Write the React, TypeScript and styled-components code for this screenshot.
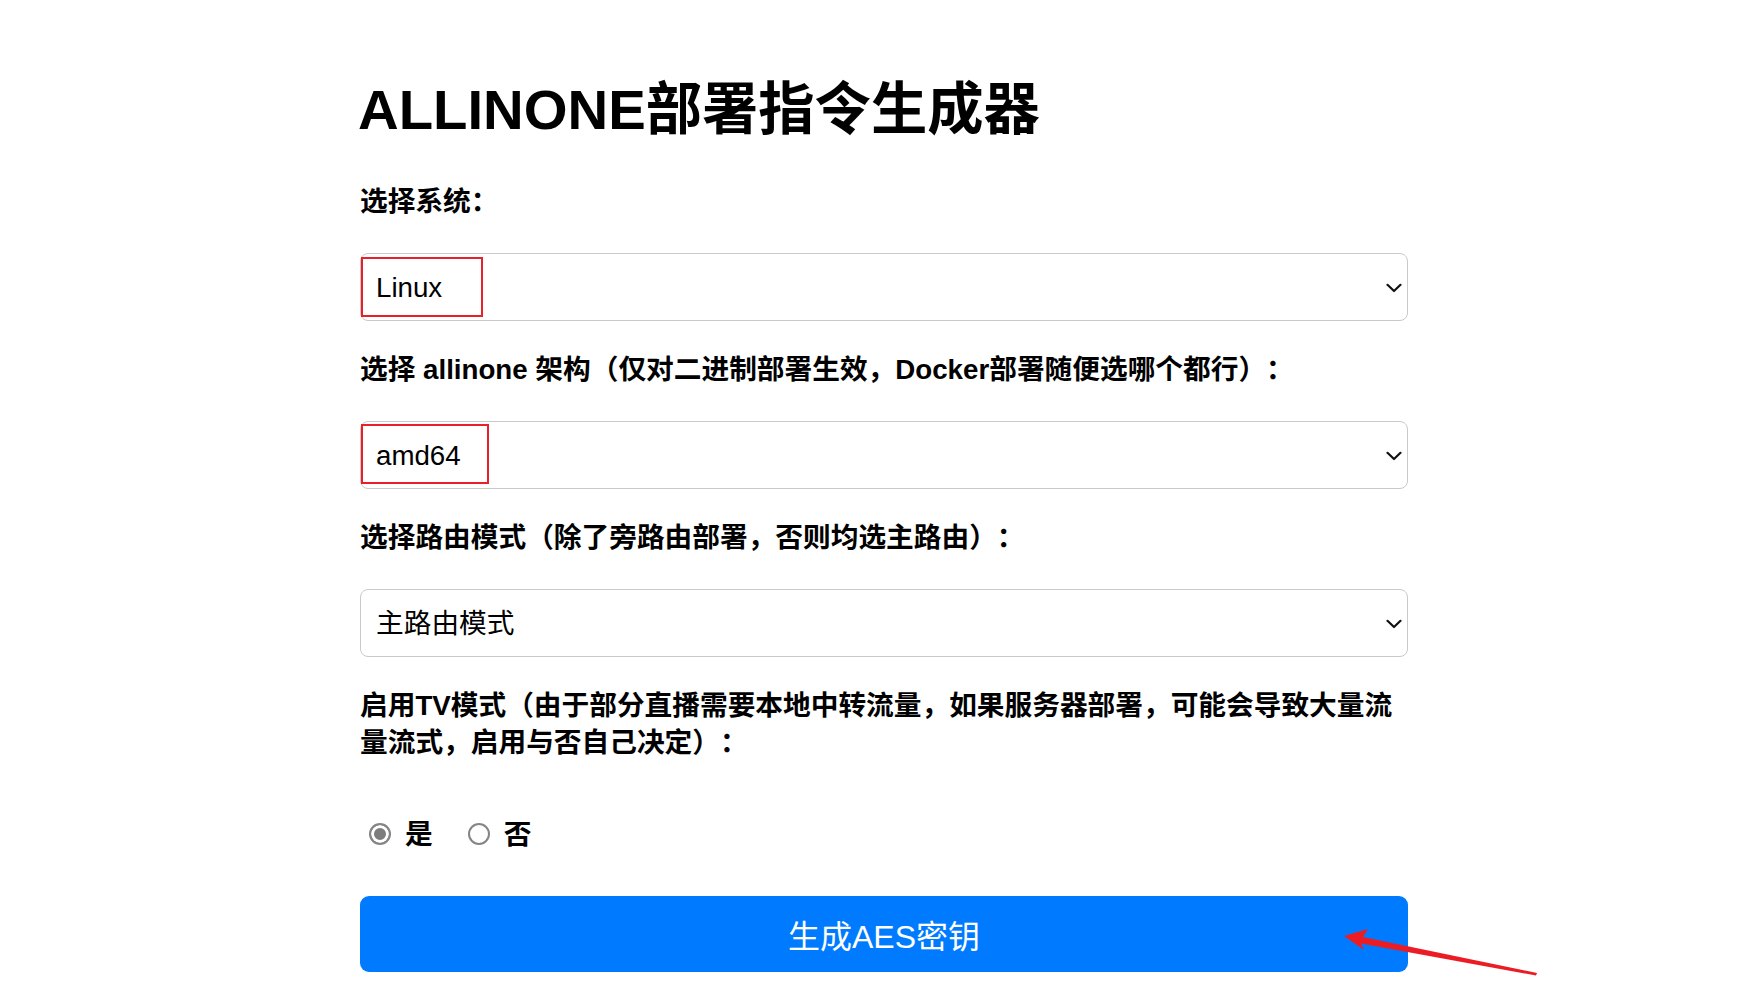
import React, { useState } from "react";
import { styled, createGlobalStyle } from "styled-components";

const GlobalStyle = createGlobalStyle`
  html, body {
    margin: 0;
    padding: 0;
    background: #fff;
  }
  body {
    font-family: "Liberation Sans", "Noto Sans CJK SC", sans-serif;
    color: #000;
    text-spacing-trim: space-all;
  }
`;

const App: React.FC = () => {
  const [tvMode, setTvMode] = useState("yes");

  return (
    <>
      <GlobalStyle />
      <Page>
        <Container>
          <Title>ALLINONE部署指令生成器</Title>

          <Label>选择系统：</Label>
          <SelectWrap>
            <Select defaultValue="linux">
              <option value="linux">Linux</option>
              <option value="windows">Windows</option>
              <option value="macos">macOS</option>
            </Select>
            <Chevron />
            <Marker $top={4} $width={122} />
          </SelectWrap>

          <Label>选择 allinone 架构（仅对二进制部署生效，Docker部署随便选哪个都行）：</Label>
          <SelectWrap>
            <Select defaultValue="amd64">
              <option value="amd64">amd64</option>
              <option value="arm64">arm64</option>
            </Select>
            <Chevron />
            <Marker $top={3} $width={128} />
          </SelectWrap>

          <Label>选择路由模式（除了旁路由部署，否则均选主路由）：</Label>
          <SelectWrap>
            <Select defaultValue="main">
              <option value="main">主路由模式</option>
              <option value="bypass">旁路由模式</option>
            </Select>
            <Chevron />
          </SelectWrap>

          <Label>
            启用TV模式（由于部分直播需要本地中转流量，如果服务器部署，可能会导致大量流量流式，启用与否自己决定）：
          </Label>
          <RadioRow>
            <RadioLabel>
              <Radio
                type="radio"
                name="tv"
                checked={tvMode === "yes"}
                onChange={() => setTvMode("yes")}
              />
              <span>是</span>
            </RadioLabel>
            <RadioLabel>
              <Radio
                type="radio"
                name="tv"
                checked={tvMode === "no"}
                onChange={() => setTvMode("no")}
              />
              <span>否</span>
            </RadioLabel>
          </RadioRow>

          <Button>生成AES密钥</Button>
        </Container>

        <Arrow width="200" height="60" viewBox="0 0 200 60">
          <polygon
            points="4,16 28,9 23,17 197,53 196,55.5 21,23.5 24,30"
            fill="#ec1c24"
          />
        </Arrow>
      </Page>
    </>
  );
};

const Chevron: React.FC = () => (
  <ChevronIcon width="16" height="10" viewBox="0 0 16 10">
    <path
      d="M1.5 1.8 L8 8 L14.5 1.8"
      fill="none"
      stroke="#111"
      strokeWidth="2.2"
      strokeLinecap="round"
      strokeLinejoin="round"
    />
  </ChevronIcon>
);

const Page = styled.div`
  position: relative;
  min-height: 1001px;
  padding: 77px 0 0 360px;
  box-sizing: border-box;
`;

const Container = styled.div`
  width: 1048px;
  display: flex;
  flex-direction: column;
`;

const Title = styled.h1`
  margin: 0 0 40px -2px;
  font-size: 56.3px;
  line-height: 66px;
  font-weight: 700;
`;

const Label = styled.label`
  display: block;
  font-size: 27.7px;
  line-height: 37px;
  font-weight: 700;
  margin-bottom: 33px;
`;

const SelectWrap = styled.div`
  position: relative;
  margin-bottom: 30px;
`;

const Select = styled.select`
  appearance: none;
  width: 100%;
  height: 68px;
  box-sizing: border-box;
  padding: 0 50px 0 15px;
  border: 1px solid #cacaca;
  border-radius: 8px;
  background: #fff;
  color: #000;
  font-family: "Liberation Sans", "Noto Sans CJK SC", sans-serif;
  font-size: 27.7px;
  outline: none;
`;

const ChevronIcon = styled.svg`
  position: absolute;
  right: 6px;
  top: 50%;
  transform: translateY(-40%);
  pointer-events: none;
`;

const Marker = styled.div<{ $top: number; $width: number }>`
  position: absolute;
  left: 1px;
  top: ${(p) => p.$top}px;
  width: ${(p) => p.$width}px;
  height: 60px;
  box-sizing: border-box;
  border: 2px solid #e8202a;
  pointer-events: none;
`;

const RadioRow = styled.div`
  display: flex;
  align-items: center;
  gap: 26px;
  height: 40px;
  margin: 18px 0 44px;
`;

const RadioLabel = styled.label`
  display: flex;
  align-items: center;
  gap: 14px;
  font-size: 27.7px;
  font-weight: 700;
  cursor: pointer;
`;

const Radio = styled.input`
  appearance: none;
  width: 22px;
  height: 22px;
  margin: 3px 0 0 9px;
  border: 2px solid #858585;
  border-radius: 50%;
  background: #fff;
  box-sizing: border-box;
  cursor: pointer;

  &:checked {
    background: #7d7d7d;
    box-shadow: inset 0 0 0 3px #fff;
  }
`;

const Button = styled.button`
  width: 100%;
  height: 76px;
  border: none;
  border-radius: 9px;
  background: #007bff;
  color: #fff;
  font-family: "Liberation Sans", "Noto Sans CJK SC", sans-serif;
  font-size: 32px;
  cursor: pointer;
`;

const Arrow = styled.svg`
  position: absolute;
  left: 1340px;
  top: 920px;
  pointer-events: none;
`;

export default App;
